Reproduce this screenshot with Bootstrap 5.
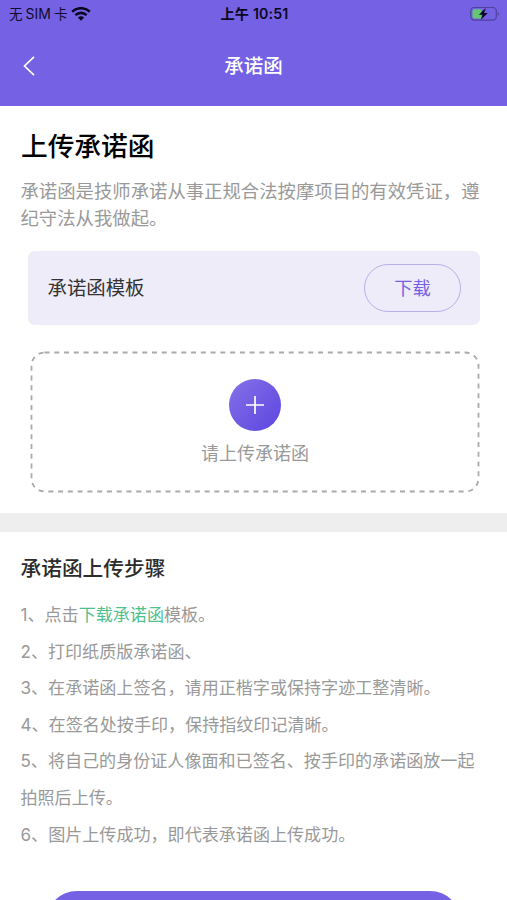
<!DOCTYPE html>
<html lang="zh-CN">
<head>
<meta charset="utf-8">
<meta name="viewport" content="width=device-width, initial-scale=1">
<title>承诺函</title>
<link href="https://cdn.jsdelivr.net/npm/bootstrap@5.3.0/dist/css/bootstrap.min.css" rel="stylesheet">
<style>
body { font-family: Inter, "Noto Sans CJK SC", sans-serif; background: #fff; color: #333; }
.screen { height: 900px; overflow: hidden; }
.app-header { background: #7461e4; height: 105.500px; flex: none; }
.status-bar { height: 28px; padding: 0 7px 0 9px; font-size: 13.5px; line-height: 28px; color: #110c2c; }
.status-side { flex: 1 1 0; }
.carrier-latin { margin: 0 3px; font-size: 14px; }
.status-time { font-weight: 600; font-size: 14.2px; letter-spacing: .15px; color: #0b0720; }
.title-bar { height: 76px; padding: 0 22px; color: #fff; }
.title-bar h1 { font-size: 19.5px; font-weight: 500; line-height: 28px; }
.title-side { width: 40px; }
.upload-block { height: 407.500px; padding: 22.500px 21px 0; flex: none; }
.upload-block h2 { font-size: 26.7px; font-weight: 500; line-height: 36px; color: #000; }
.intro { font-size: 18.36px; line-height: 27px; color: #999; margin: 14px 0 0 -.5px; white-space: nowrap; }
.template-row { height: 74px; margin: 19px 6px 0 7px; padding: 0 19px 0 19.500px; border-radius: 7px; background: #efecfa; font-size: 19.4px; }
.template-name { padding-top: 2px; }
.btn-download { width: 97px; height: 48px; padding: 1px 0 0; border: 1px solid #b9afe9; color: #7461e4; font-size: 18.3px; }
.drop-area { height: 142px; margin: 26px 6px 0 9px; }
.drop-outline { position: absolute; inset: 0; }
.drop-content { padding-top: 28px; }
.plus-circle { width: 52px; height: 52px; background: linear-gradient(135deg, #8571e8, #5c45df); }
.drop-label { font-size: 18px; line-height: 26px; color: #999; margin-top: 10px; }
.divider { height: 19px; background: #eee; flex: none; }
.steps-block { height: 359px; padding: 22px 21px 0 20.500px; flex: none; }
.steps-block h3 { font-size: 20.7px; font-weight: 500; line-height: 30px; color: #2c2c2c; }
.steps { font-size: 17.07px; line-height: 36.6px; color: #999; margin-top: 13px; white-space: nowrap; }
.steps a { color: #4fc08d; }
.btn-submit { height: 62px; margin: 0 46px; background: #7461e4; flex: none; }
</style>
</head>
<body>
<div class="screen d-flex flex-column">
  <header class="app-header">
    <div class="status-bar d-flex align-items-center">
      <div class="status-side d-flex align-items-center">
        <span class="d-flex">无<span class="carrier-latin">SIM</span>卡</span>
        <svg class="ms-1" width="20" height="15" viewBox="0 0 20 15" fill="none" stroke="#0b0720" stroke-width="2.6">
          <path d="M1.200 4.800C6.200 0 13.800 0 18.800 4.800"/>
          <path d="M4.400 8.100C7.600 5.100 12.400 5.100 15.600 8.100"/>
          <path d="M6.900 10.600C8.700 8.900 11.300 8.900 13.100 10.600L10 13.700Z" fill="#0b0720" stroke="none"/>
        </svg>
      </div>
      <span class="status-time">上午 10:51</span>
      <div class="status-side d-flex align-items-center justify-content-end">
        <svg width="30" height="15" viewBox="0 0 30 15">
          <rect x=".7" y=".5" width="25.600" height="12.600" rx="3.600" fill="none" stroke="#4f429e" stroke-width="1.200"/>
          <path d="M4.500 2.300H11.500V11.500H4.500Q2.500 11.500 2.500 9.500V4.300Q2.500 2.300 4.500 2.300Z" fill="#65c673"/>
          <path d="M27.800 4.700Q30 6.800 27.800 8.900Z" fill="#4f429e"/>
          <path d="M15.800 1L8.800 7.700H12.500L10.800 12.700L17.800 6H14.100Z" fill="#0b0720"/>
        </svg>
      </div>
    </div>
    <div class="title-bar d-flex align-items-center justify-content-between">
      <div class="title-side d-flex">
        <svg width="14" height="20" viewBox="0 0 14 20" fill="none" stroke="#fff" stroke-width="1.700"><path d="M12 .8L2.500 10L12 19.200"/></svg>
      </div>
      <h1 class="m-0">承诺函</h1>
      <div class="title-side"></div>
    </div>
  </header>

  <section class="upload-block">
    <h2 class="mb-0">上传承诺函</h2>
    <p class="intro">承诺函是技师承诺从事正规合法按摩项目的有效凭证，遵<br>纪守法从我做起。</p>
    <div class="template-row d-flex align-items-center justify-content-between">
      <span class="template-name">承诺函模板</span>
      <button type="button" class="btn btn-download rounded-pill">下载</button>
    </div>
    <div class="drop-area position-relative">
      <svg class="drop-outline" width="450" height="142" viewBox="0 0 450 142" fill="none">
        <rect x="1.500" y="1.500" width="447" height="139" rx="13" stroke="#aaa" stroke-width="1.800" stroke-dasharray="5 4.770"/>
      </svg>
      <div class="drop-content d-flex flex-column align-items-center">
        <div class="plus-circle rounded-circle d-flex align-items-center justify-content-center">
          <svg width="20" height="20" viewBox="0 0 20 20" stroke="#fff" stroke-width="1.700"><path d="M1 10H19M10 1V19"/></svg>
        </div>
        <div class="drop-label">请上传承诺函</div>
      </div>
    </div>
  </section>

  <div class="divider"></div>

  <section class="steps-block">
    <h3 class="mb-0">承诺函上传步骤</h3>
    <div class="steps">
      <div>1、点击<a class="text-decoration-none">下载承诺函</a>模板。</div>
      <div>2、打印纸质版承诺函、</div>
      <div>3、在承诺函上签名，请用正楷字或保持字迹工整清晰。</div>
      <div>4、在签名处按手印，保持指纹印记清晰。</div>
      <div>5、将自己的身份证人像面和已签名、按手印的承诺函放一起<br>拍照后上传。</div>
      <div>6、图片上传成功，即代表承诺函上传成功。</div>
    </div>
  </section>

  <div class="btn-submit rounded-pill"></div>
</div>
<script src="https://cdn.jsdelivr.net/npm/bootstrap@5.3.0/dist/js/bootstrap.bundle.min.js"></script>
</body>
</html>
